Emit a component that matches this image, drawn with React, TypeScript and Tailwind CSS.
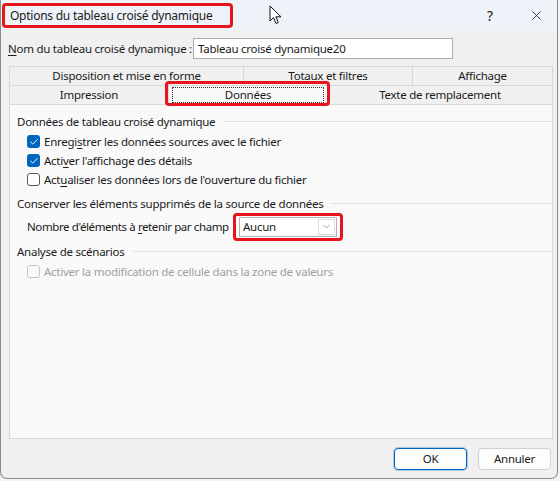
import { Check, ChevronDown, X } from "lucide-react";

const font = { fontFamily: '"Noto Sans", "Segoe UI", sans-serif', letterSpacing: "-0.25px" };

// small underlined access-key letter
const Key = ({ c }: { c: string }) => <span className="underline underline-offset-2">{c}</span>;

const Box = ({ checked, disabled }: { checked?: boolean; disabled?: boolean }) => (
  <span
    className={`flex h-[13px] w-[13px] shrink-0 items-center justify-center rounded-[3px] ${
      checked
        ? "bg-[#0067c0]"
        : disabled
        ? "border border-[#c4c4c4] bg-[#f9f9f9]"
        : "border border-[#5a5a5a] bg-white"
    }`}
  >
    {checked && <Check size={10} strokeWidth={2.2} className="text-white" />}
  </span>
);

const Section = ({ title }: { title: string }) => (
  <div className="flex items-center gap-2">
    <span>{title}</span>
    <div className="h-px flex-1 bg-[#dedede]" />
  </div>
);

const Tab = ({ label, w }: { label: string; w: string }) => (
  <div className={`${w} flex h-[19px] items-center justify-center border-r border-t border-[#d9d9d9] bg-[#f0f0f0] first:border-l`}>
    {label}
  </div>
);

const App = () => {
  return (
    <div className="h-[481px] w-[560px] whitespace-nowrap bg-[#f4f4f4] text-[11.5px] text-[#1a1a1a]" style={font}>
      <div className="flex h-[479px] w-[558px] flex-col overflow-hidden rounded-b-[7px] border-x border-b border-[#8c8c8c] bg-[#f0f0f0]">
        {/* Title bar */}
        <div className="relative flex h-[30px] shrink-0 items-center bg-[#eef3f9] pl-[1px] pt-[1px]">
          <div className="flex h-[25px] w-[231px] items-center rounded-[4px] border-[3px] border-[#e8141c] pl-[5px] text-[12px]">
            Options du tableau croisé dynamique
          </div>
          {/* mouse pointer */}
          <svg className="absolute left-[268px] top-[5px]" width="14" height="20" viewBox="0 0 14 20">
            <path d="M1 1 L1 16 L4.5 12.5 L7 18.5 L9.3 17.5 L6.9 11.8 L12 11.8 Z" fill="white" stroke="#111" strokeWidth="1" strokeLinejoin="round" />
          </svg>
          <span className="absolute left-[486px] top-[5px] text-[14px]">?</span>
          <X size={15} strokeWidth={1.3} className="absolute left-[528px] top-[8px]" />
        </div>

        {/* Name row */}
        <div className="flex h-[36px] shrink-0 items-center pl-[7px] pt-[1px]">
          <span className="w-[185px]">
            <Key c="N" />om du tableau croisé dynamique :
          </span>
          <div className="flex h-[21px] w-[260px] items-center border border-[#adadad] bg-white pl-[4px]">
            Tableau croisé dynamique20
          </div>
        </div>

        {/* Tabs */}
        <div className="ml-[8px] w-[544px] shrink-0">
          <div className="flex">
            <Tab label="Disposition et mise en forme" w="w-[235px]" />
            <Tab label="Totaux et filtres" w="w-[169px]" />
            <Tab label="Affichage" w="w-[140px]" />
          </div>
          <div className="flex">
            <Tab label="Impression" w="w-[160px]" />
            <div className="relative flex h-[19px] w-[159px] items-center justify-center border-t border-r border-[#d9d9d9] bg-[#f9f9f9]">
              <div className="absolute inset-x-[3px] inset-y-[1px] border border-dotted border-[#333]" />
              <span className="relative">Données</span>
              <div className="absolute -bottom-[2px] -left-[4px] -right-[3px] -top-[5px] rounded-[4px] border-[3px] border-[#e8141c]" />
            </div>
            <Tab label="Texte de remplacement" w="w-[225px]" />
          </div>
        </div>

        {/* Panel */}
        <div className="ml-[8px] flex h-[335px] w-[544px] shrink-0 flex-col border border-[#d9d9d9] bg-[#f9f9f9] pl-[7px] pt-[8px]">
          <Section title="Données de tableau croisé dynamique" />
          <div className="mt-[4px] flex flex-col gap-[4px] pl-[10px]">
            <label className="flex h-[15px] items-center gap-[4px]">
              <Box checked />
              <span>
                Enregi<Key c="s" />trer les données sources avec le fichier
              </span>
            </label>
            <label className="flex h-[15px] items-center gap-[4px]">
              <Box checked />
              <span>
                Acti<Key c="v" />er l'affichage des détails
              </span>
            </label>
            <label className="flex h-[15px] items-center gap-[4px]">
              <Box />
              <span>
                Act<Key c="u" />aliser les données lors de l'ouverture du fichier
              </span>
            </label>
          </div>

          <div className="mt-[8px]">
            <Section title="Conserver les éléments supprimés de la source de données" />
          </div>
          <div className="mt-0 flex items-center pl-[10px]">
            <span className="w-[206px] tracking-[-0.4px]">
              Nombre d'éléments à <Key c="r" />etenir par champ
            </span>
            <div className="flex h-[28px] w-[110px] items-center justify-center rounded-[4px] border-[3px] border-[#e8141c]">
              <div className="flex h-[20px] w-[98px] items-center border border-[#b5b5b5] bg-white pl-[3px] pr-[1px]">
                <span className="flex-1">Aucun</span>
                <span className="flex h-[16px] w-[17px] items-center justify-center border border-[#dcdcdc] bg-white">
                  <ChevronDown size={11} strokeWidth={1.2} className="text-[#555]" />
                </span>
              </div>
            </div>
          </div>

          <div className="mt-[2px]">
            <Section title="Analyse de scénarios" />
          </div>
          <label className="mt-[4px] flex h-[15px] items-center gap-[4px] pl-[10px] text-[#a0a0a0]">
            <Box disabled />
            <span>Activer la modification de cellule dans la zone de valeurs</span>
          </label>
        </div>

        {/* Buttons */}
        <div className="flex flex-1 items-center justify-end gap-[11px] pr-[6px] pt-[1px]">
          <button className="h-[22px] w-[73px] rounded-[4px] border border-[#0067c0] bg-[#fdfdfd] outline outline-1 outline-[#0067c0]/30">
            OK
          </button>
          <button className="h-[22px] w-[73px] rounded-[4px] border border-[#d0d0d0] bg-[#fdfdfd]">Annuler</button>
        </div>
      </div>
    </div>
  );
};

export default App;
